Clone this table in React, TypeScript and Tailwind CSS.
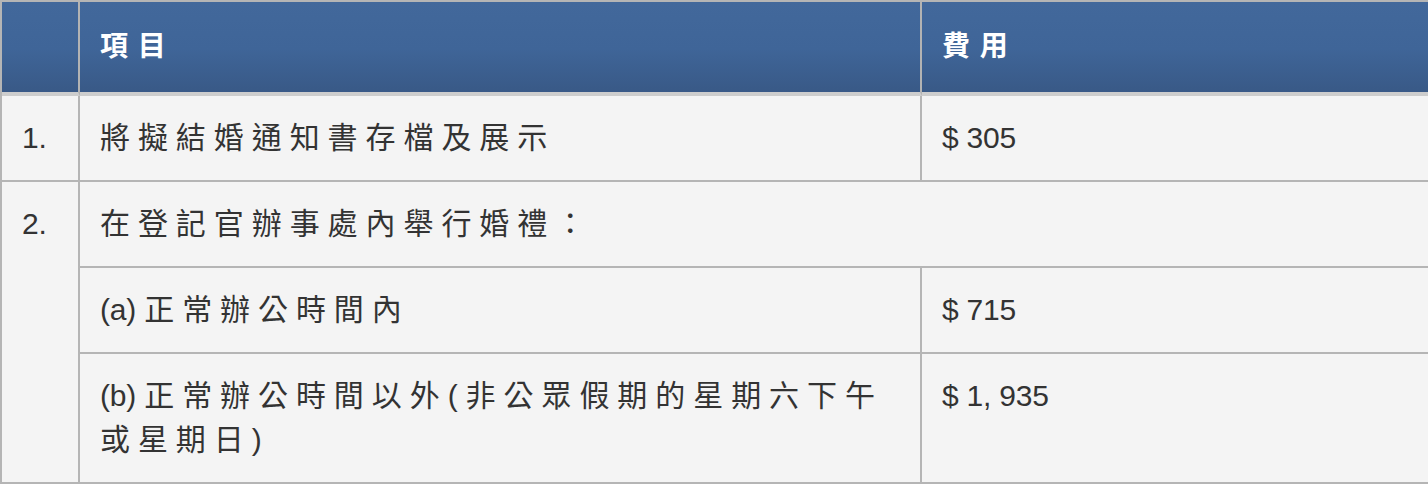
import React from 'react';

const font = { fontFamily: '"Liberation Sans", "Noto Sans CJK TC", sans-serif' };

const th = 'py-[23px] px-5 text-left align-top font-bold text-white text-[28px] leading-[44px] tracking-[1px] border-r-2 border-r-[#b3b3b3] border-b-4 border-b-[#cdcdcd]';
const td = 'p-5 align-top text-[30px] leading-[44px] tracking-[-0.2px] text-[#333] border-r-2 border-b-2 border-[#b5b5b5]';

const App = () => {
  return (
    <div className="w-[1428px] h-[484px] overflow-hidden bg-white" style={font}>
      <table className="w-[1440px] table-fixed border-separate border-spacing-0 border-t-2 border-l-2 border-[#b5b5b5] bg-[#f4f4f4]">
        <colgroup>
          <col className="w-[78px]" />
          <col className="w-[842px]" />
          <col />
        </colgroup>
        <thead className="bg-linear-to-b from-[#42689b] via-[#3f6598] to-[#385885]">
          <tr>
            <th className={th}></th>
            <th className={th}>項 目</th>
            <th className={th}>費 用</th>
          </tr>
        </thead>
        <tbody>
          <tr>
            <td className={td}>1.</td>
            <td className={td}>將 擬 結 婚 通 知 書 存 檔 及 展 示</td>
            <td className={td}>$ 305</td>
          </tr>
          <tr>
            <td className={td} rowSpan={3}>2.</td>
            <td className={td} colSpan={2}>在 登 記 官 辦 事 處 內 舉 行 婚 禮 ：</td>
          </tr>
          <tr>
            <td className={td}>(a) 正 常 辦 公 時 間 內</td>
            <td className={td}>$ 715</td>
          </tr>
          <tr>
            <td className={td}>(b) 正 常 辦 公 時 間 以 外 ( 非 公 眾 假 期 的 星 期 六 下 午 或 星 期 日 )</td>
            <td className={td}>$ 1, 935</td>
          </tr>
        </tbody>
      </table>
    </div>
  );
};

export default App;
